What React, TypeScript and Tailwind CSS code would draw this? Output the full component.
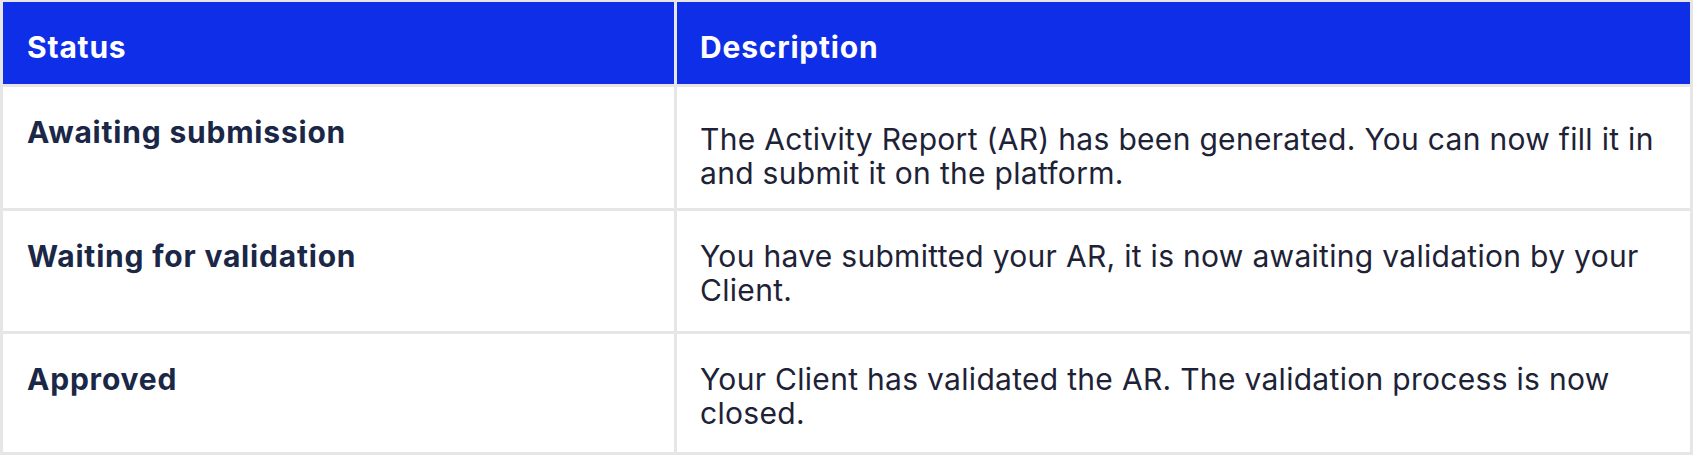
import React from "react";

const rows = [
  {
    status: "Awaiting submission",
    lines: [
      "The Activity Report (AR) has been generated. You can now fill it in",
      "and submit it on the platform.",
    ],
    h: "h-[121px]",
    dpt: "pt-[35px]",
  },
  {
    status: "Waiting for validation",
    lines: [
      "You have submitted your AR, it is now awaiting validation by your",
      "Client.",
    ],
    h: "h-[120px]",
    dpt: "pt-[28px]",
  },
  {
    status: "Approved",
    lines: [
      "Your Client has validated the AR. The validation process is now",
      "closed.",
    ],
    h: "h-[118px]",
    dpt: "pt-[28px]",
  },
];

export default function App() {
  return (
    <div className="w-[1695px] h-[459px] bg-white" style={{ fontFamily: "Inter, 'Noto Sans', sans-serif" }}>
      <div className="w-[1693px] bg-[#e6e6e6] pt-[2px] px-[3px] pb-[3px] grid grid-cols-[671px_1013px] gap-[3px]">
        <div className="h-[82px] bg-[#0f2ee8] text-white font-bold text-[30px] tracking-[0.8px] px-[24px] flex items-center pt-[9px]">
          Status
        </div>
        <div className="h-[82px] bg-[#0f2ee8] text-white font-bold text-[30px] tracking-[0.8px] px-[23px] flex items-center pt-[9px]">
          Description
        </div>
        {rows.map((r) => (
          <React.Fragment key={r.status}>
            <div className={`${r.h} bg-white px-[24px] pt-[28px] text-[30px] leading-[34px] font-bold tracking-[0.8px] text-[#1b2746]`}>
              {r.status}
            </div>
            <div className={`${r.h} ${r.dpt} bg-white px-[23px] text-[30px] leading-[34px] tracking-[0.3px] text-[#1e2236]`}>
              {r.lines.map((l) => (
                <div key={l} className="whitespace-nowrap">{l}</div>
              ))}
            </div>
          </React.Fragment>
        ))}
      </div>
    </div>
  );
}
